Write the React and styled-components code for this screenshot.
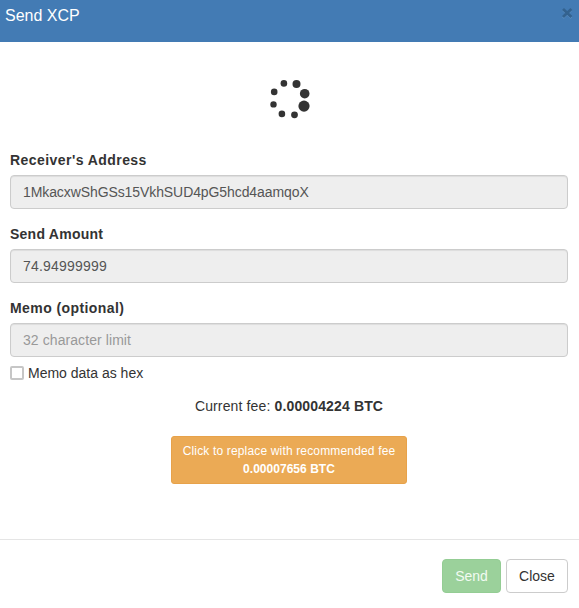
import React from "react";
import styled, { createGlobalStyle } from "styled-components";

const GlobalStyle = createGlobalStyle`
  *, *::before, *::after { box-sizing: border-box; }
  body {
    margin: 0;
    background: #fff;
    color: #333;
    font: 14px/20px "Liberation Sans", Arial, sans-serif;
  }
`;

const Modal = styled.div`
  display: flex;
  flex-direction: column;
  height: 608px;
`;

const Header = styled.header`
  display: flex;
  justify-content: space-between;
  height: 42px;
  padding: 5px 5px 0;
  background: #437bb4;
  color: #fff;
`;

const Title = styled.h4`
  margin: 0;
  font-size: 16px;
  font-weight: 400;
  line-height: 22px;
`;

const CloseIcon = styled.button`
  width: 14px;
  height: 14px;
  margin: 1px 0 0;
  padding: 0;
  border: 0;
  background: none;
  svg { display: block; }
`;

const Body = styled.main`
  display: flex;
  flex-direction: column;
  flex: 1;
  padding: 33px 11px 0 10px;
`;

const Spinner = styled.svg`
  display: block;
  align-self: center;
  width: 48px;
  height: 48px;
  margin-bottom: 27px;
  fill: #333;
`;

const Field = styled.div`
  display: flex;
  flex-direction: column;
  gap: 5px;
  margin-bottom: 15px;
`;

const Label = styled.label`
  font-weight: 700;
  letter-spacing: ${(p) => p.$spacing};
`;

const Input = styled.input`
  width: 100%;
  height: 34px;
  padding: 6px 12px;
  border: 1px solid #ccc;
  border-radius: 4px;
  background: #eee;
  box-shadow: inset 0 1px 1px rgba(0, 0, 0, 0.075);
  color: #555;
  font: inherit;
  letter-spacing: ${(p) => p.$spacing || "normal"};
  &::placeholder { color: #999; opacity: 1; }
`;

const CheckRow = styled.label`
  display: flex;
  align-items: center;
  gap: 4px;
  margin-top: -9px;
`;

const Checkbox = styled.input`
  appearance: none;
  width: 14px;
  height: 14px;
  margin: 0;
  border: 2px solid #c6c6c6;
  border-radius: 2px;
  background: #fff;
`;

const Fee = styled.div`
  margin-top: 13px;
  text-align: center;
  letter-spacing: 0.14px;
`;

const FeeButton = styled.button`
  align-self: center;
  width: 236px;
  height: 48px;
  margin-top: 20px;
  padding: 0;
  border: 1px solid #e7a24a;
  border-radius: 3px;
  background: #ebaa55;
  color: #fff;
  font: 12px/18px "Liberation Sans", Arial, sans-serif;
  letter-spacing: 0.16px;
  b { letter-spacing: 0.03px; }
`;

const Footer = styled.footer`
  display: flex;
  justify-content: flex-end;
  gap: 5px;
  height: 69px;
  padding: 19px 11px 0 0;
  border-top: 1px solid #e5e5e5;
`;

const Button = styled.button`
  width: ${(p) => (p.$success ? "59px" : "62px")};
  height: 34px;
  padding: 0;
  border: 1px solid ${(p) => (p.$success ? "#94cd94" : "#ccc")};
  border-radius: 4px;
  background: ${(p) => (p.$success ? "#9bd19b" : "#fff")};
  color: ${(p) => (p.$success ? "#f2fbf2" : "#333")};
  font: inherit;
`;

const dots = [
  [23.9, 8.4, 3.3],
  [36.5, 8.9, 4],
  [44.7, 18.7, 4.8],
  [44, 31.1, 5.6],
  [34.5, 39.8, 3.4],
  [21.9, 38.9, 3.3],
  [13.5, 29.4, 3.2],
  [14.2, 16.9, 3.3],
];

export default function App() {
  return (
    <>
      <GlobalStyle />
      <Modal>
        <Header>
          <Title>Send XCP</Title>
          <CloseIcon aria-label="Close">
            <svg width="14" height="14" viewBox="0 0 14 14">
              <path d="M3 4l8.4 8M11.4 4l-8.4 8" stroke="#94b9dc" strokeWidth="2.4" opacity=".35" />
              <path d="M3 2.9l8.4 8.2M11.4 2.9l-8.4 8.2" stroke="#33628f" strokeWidth="2.8" />
            </svg>
          </CloseIcon>
        </Header>
        <Body>
          <Spinner viewBox="5 0 48 48" role="status" aria-label="Loading">
            {dots.map(([x, y, r]) => (
              <circle key={`${x}-${y}`} cx={x} cy={y} r={r} />
            ))}
          </Spinner>
          <Field>
            <Label htmlFor="address" $spacing="0.44px">Receiver's Address</Label>
            <Input id="address" disabled $spacing="-0.09px" value="1MkacxwShGSs15VkhSUD4pG5hcd4aamqoX" />
          </Field>
          <Field>
            <Label htmlFor="amount" $spacing="0.25px">Send Amount</Label>
            <Input id="amount" disabled $spacing="0.2px" value="74.94999999" />
          </Field>
          <Field>
            <Label htmlFor="memo" $spacing="0.42px">Memo (optional)</Label>
            <Input id="memo" disabled $spacing="0.08px" placeholder="32 character limit" />
          </Field>
          <CheckRow>
            <Checkbox type="checkbox" />
            Memo data as hex
          </CheckRow>
          <Fee>
            Current fee: <b>0.00004224 BTC</b>
          </Fee>
          <FeeButton>
            Click to replace with recommended fee
            <br />
            <b>0.00007656 BTC</b>
          </FeeButton>
        </Body>
        <Footer>
          <Button $success>Send</Button>
          <Button>Close</Button>
        </Footer>
      </Modal>
    </>
  );
}
